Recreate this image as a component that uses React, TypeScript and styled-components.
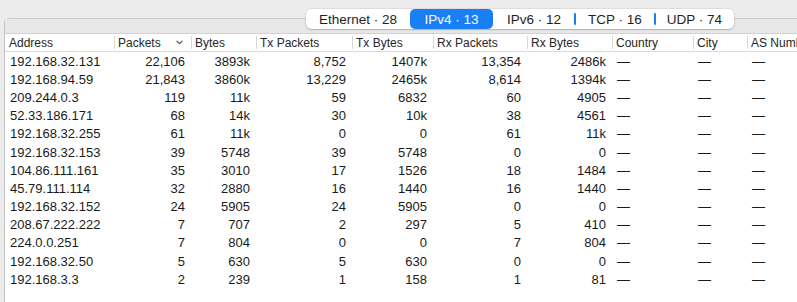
import styled, { createGlobalStyle } from 'styled-components';

const GlobalStyle = createGlobalStyle`
  html, body {
    margin: 0;
    padding: 0;
    background: #ececec;
  }
  body {
    font-family: "Liberation Sans", Arial, sans-serif;
    -webkit-font-smoothing: antialiased;
  }
`;

const COLUMNS = '109px 77px 65px 96px 81px 94px 85px 81px 54px 1fr';

const Page = styled.div`
  width: 797px;
  height: 302px;
  overflow: hidden;
  background: #ececec;
  display: flex;
  flex-direction: column;
`;

const TabsRow = styled.div`
  height: 20px;
  display: flex;
  padding: 9px 0 0 306px;
  position: relative;
  z-index: 1;
`;

const Segmented = styled.div`
  display: flex;
  height: 20px;
  background: #ffffff;
  border-radius: 5px;
  box-shadow: 0 0 0 0.5px rgba(0, 0, 0, 0.12), 0 1px 1.5px rgba(0, 0, 0, 0.18);
`;

const Segment = styled.div<{ $w: number; $active?: boolean; $sep?: boolean }>`
  width: ${(p) => p.$w}px;
  height: 20px;
  box-sizing: border-box;
  display: flex;
  align-items: center;
  justify-content: center;
  font-size: 13.5px;
  color: ${(p) => (p.$active ? '#ffffff' : '#1f1f1f')};
  background: ${(p) => (p.$active ? '#1a7ef7' : 'transparent')};
  border-radius: 5px;
  position: relative;

  &::before {
    content: '';
    display: ${(p) => (p.$sep ? 'block' : 'none')};
    position: absolute;
    left: -1px;
    top: 4px;
    width: 2px;
    height: 12px;
    border-radius: 1px;
    background: #1a7ef7;
  }
`;

const Panel = styled.div`
  margin: -11px 0 0 4px;
  flex: 1;
  border-top: 1px solid #cdcdcd;
  border-left: 1px solid #c4c4c4;
  border-top-left-radius: 5px;
  background: #ffffff;
  display: flex;
  flex-direction: column;
`;

const PanelStrip = styled.div`
  height: 14px;
  background: #e7e7e7;
  border-top-left-radius: 5px;
  border-bottom: 1px solid #d2d2d2;
`;

const HeaderRow = styled.div`
  display: grid;
  grid-template-columns: ${COLUMNS};
  height: 17px;
  border-bottom: 1px solid #dadada;
  background: #ffffff;
`;

const HeaderCell = styled.div<{ $first?: boolean }>`
  display: flex;
  align-items: center;
  justify-content: space-between;
  padding: 0 8px 0 4px;
  font-size: 12px;
  color: #262626;
  white-space: nowrap;
  overflow: hidden;
  position: relative;

  &::before {
    content: '';
    display: ${(p) => (p.$first ? 'none' : 'block')};
    position: absolute;
    left: 0;
    top: 2px;
    bottom: 2px;
    width: 1px;
    background: #d8d8d8;
  }
`;

const Row = styled.div`
  display: grid;
  grid-template-columns: ${COLUMNS};
  height: 18.2px;
  align-items: center;
`;

const Cell = styled.div<{ $num?: boolean }>`
  font-size: 13px;
  color: #1a1a1a;
  white-space: nowrap;
  overflow: hidden;
  text-align: ${(p) => (p.$num ? 'right' : 'left')};
  padding: ${(p) => (p.$num ? '0 6px 0 0' : '0 0 0 5px')};
`;

const Chevron = () => (
  <svg width="7" height="5" viewBox="0 0 7 5">
    <path d="M1 1.2 L3.5 3.6 L6 1.2" fill="none" stroke="#555" strokeWidth="1.2" strokeLinecap="round" strokeLinejoin="round" />
  </svg>
);

const tabs = [
  { label: 'Ethernet · 28', w: 104 },
  { label: 'IPv4 · 13', w: 83, active: true },
  { label: 'IPv6 · 12', w: 82 },
  { label: 'TCP · 16', w: 80, sep: true },
  { label: 'UDP · 74', w: 79, sep: true },
];

const headers = ['Address', 'Packets', 'Bytes', 'Tx Packets', 'Tx Bytes', 'Rx Packets', 'Rx Bytes', 'Country', 'City', 'AS Number'];

type Entry = [string, string, string, string, string, string, string];

const rows: Entry[] = [
  ['192.168.32.131', '22,106', '3893k', '8,752', '1407k', '13,354', '2486k'],
  ['192.168.94.59', '21,843', '3860k', '13,229', '2465k', '8,614', '1394k'],
  ['209.244.0.3', '119', '11k', '59', '6832', '60', '4905'],
  ['52.33.186.171', '68', '14k', '30', '10k', '38', '4561'],
  ['192.168.32.255', '61', '11k', '0', '0', '61', '11k'],
  ['192.168.32.153', '39', '5748', '39', '5748', '0', '0'],
  ['104.86.111.161', '35', '3010', '17', '1526', '18', '1484'],
  ['45.79.111.114', '32', '2880', '16', '1440', '16', '1440'],
  ['192.168.32.152', '24', '5905', '24', '5905', '0', '0'],
  ['208.67.222.222', '7', '707', '2', '297', '5', '410'],
  ['224.0.0.251', '7', '804', '0', '0', '7', '804'],
  ['192.168.32.50', '5', '630', '5', '630', '0', '0'],
  ['192.168.3.3', '2', '239', '1', '158', '1', '81'],
];

const App = () => (
  <Page>
    <GlobalStyle />
    <TabsRow>
      <Segmented>
        {tabs.map((t) => (
          <Segment key={t.label} $w={t.w} $active={t.active} $sep={t.sep}>{t.label}</Segment>
        ))}
      </Segmented>
    </TabsRow>
    <Panel>
      <PanelStrip />
      <HeaderRow>
        {headers.map((h, i) => (
          <HeaderCell key={h} $first={i === 0}>
            <span>{h}</span>
            {h === 'Packets' && <Chevron />}
          </HeaderCell>
        ))}
      </HeaderRow>
      {rows.map((r) => (
        <Row key={r[0]}>
          {r.map((v, i) => (
            <Cell key={i} $num={i > 0}>{v}</Cell>
          ))}
          <Cell>—</Cell>
          <Cell>—</Cell>
          <Cell>—</Cell>
        </Row>
      ))}
    </Panel>
  </Page>
);

export default App;
